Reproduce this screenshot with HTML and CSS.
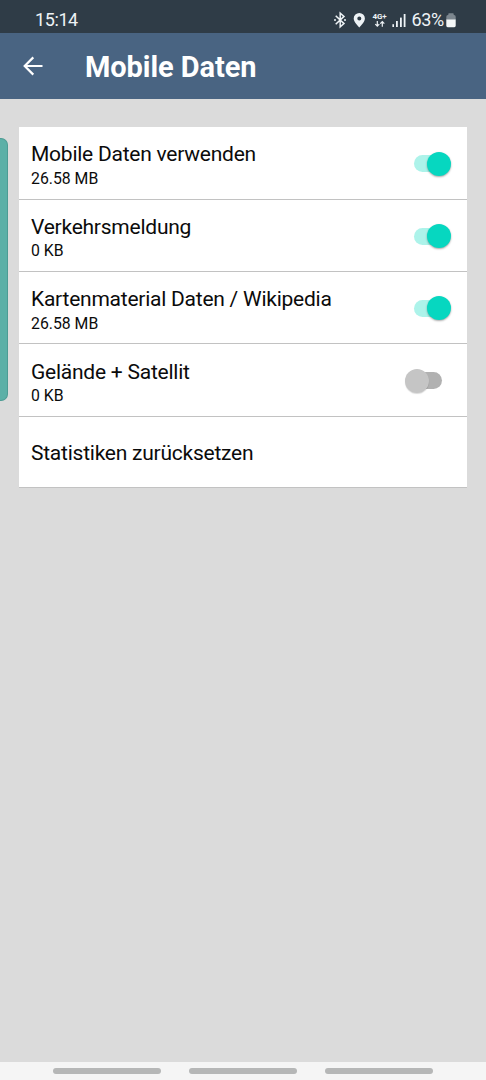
FILE: index.html
```html
<!DOCTYPE html>
<html lang="de">
<head>
<meta charset="utf-8">
<title>Mobile Daten</title>
<link rel="stylesheet" href="styles.css">
</head>
<body>
<div class="screen">
  <div class="status">
    <span class="clock">15:14</span>
    <svg class="status-icons" width="76" height="20" viewBox="0 0 76 20">
      <g fill="none" stroke="#eef3f6" stroke-width="1.5">
        <path d="M2.7 5.8 11 13.6 7.2 16.9V3.1L11 6.4 2.7 14.2"/>
      </g>
      <g fill="#eef3f6">
        <circle cx="2" cy="10" r="1"/><circle cx="12" cy="10" r="1"/>
        <path fill-rule="evenodd" d="M26.3 3a5.6 5.6 0 0 0-5.6 5.5c0 3.8 5.6 8.9 5.6 8.9s5.6-5.1 5.6-8.9A5.6 5.6 0 0 0 26.3 3zm0 3.4a2 2 0 1 1 0 4 2 2 0 0 1 0-4z"/>
        <text class="network" x="39.6" y="9.4" textLength="14">4G+</text>
        <rect x="59.4" y="14.2" width="1.6" height="2.8"/>
        <rect x="63" y="11" width="1.8" height="6"/>
        <rect x="67" y="7.6" width="1.8" height="9.4"/>
        <rect x="70.7" y="4" width="1.8" height="13"/>
      </g>
      <path d="M44.3 11v5.2M42.3 14.2l2 2 2-2M49.3 16.8v-5.2M47.3 13.6l2-2 2 2" fill="none" stroke="#eef3f6" stroke-width="1.2"/>
    </svg>
    <span class="percent">63%</span>
    <svg class="battery" width="10" height="16" viewBox="0 0 10 16">
      <path d="M2.3 2V.9Q2.3.3 3 .3h4q.7 0 .7.6V2H8q1.7 0 1.7 1.7V7H.3V3.7Q.3 2 2 2z" fill="#7c868e"/>
      <path d="M.3 6.5h9.4v6.3q0 1.4-1.4 1.4H1.7q-1.4 0-1.4-1.4z" fill="#f4f7f8"/>
    </svg>
  </div>
  <header class="bar">
    <svg class="back" width="20" height="20" viewBox="0 0 20 20" fill="none" stroke="#fff" stroke-width="2.2">
      <path d="M19.5 10H2M10.3 1.4 1.7 10l8.6 8.6"/>
    </svg>
    <h1 class="title">Mobile Daten</h1>
  </header>
  <main class="content">
    <div class="edge-handle"></div>
    <div class="card">
      <div class="row">
        <div class="labels"><div class="name">Mobile Daten verwenden</div><div class="usage">26.58 MB</div></div>
        <div class="switch on"><div class="thumb"></div></div>
      </div>
      <div class="row">
        <div class="labels"><div class="name">Verkehrsmeldung</div><div class="usage">0 KB</div></div>
        <div class="switch on"><div class="thumb"></div></div>
      </div>
      <div class="row">
        <div class="labels"><div class="name">Kartenmaterial Daten / Wikipedia</div><div class="usage">26.58 MB</div></div>
        <div class="switch on"><div class="thumb"></div></div>
      </div>
      <div class="row">
        <div class="labels"><div class="name">Gelände + Satellit</div><div class="usage">0 KB</div></div>
        <div class="switch off"><div class="thumb"></div></div>
      </div>
      <div class="row reset"><div class="name">Statistiken zurücksetzen</div></div>
    </div>
  </main>
  <nav class="nav"><i class="pill"></i><i class="pill"></i><i class="pill"></i></nav>
</div>
</body>
</html>
```
FILE: styles.css
```css
* { box-sizing: border-box; }
body { margin: 0; font-family: Roboto, "Liberation Sans", sans-serif; color: #0b0b0b; }
.screen { width: 486px; height: 1080px; display: flex; flex-direction: column; background: #dbdbdb; overflow: hidden; }
.status { height: 33px; flex: none; background: #2f3c47; color: #eef3f6; display: flex; align-items: center; padding: 7px 30px 0 35px; }
.clock { font-size: 18px; line-height: 26px; letter-spacing: -.4px; }
.status-icons { margin-left: auto; }
.network { font-size: 8px; font-weight: 700; }
.percent { font-size: 18px; line-height: 26px; letter-spacing: -.3px; margin: 0 2px 0 2.5px; }
.battery { margin-top: 1px; }
.bar { height: 66px; flex: none; background: #496482; display: flex; align-items: center; padding-left: 23px; }
.back { flex: none; }
.title { margin: 2px 0 0 42px; font-size: 29px; line-height: 34px; letter-spacing: -.08px; font-weight: 700; color: #fff; }
.content { flex: 1; display: flex; align-items: flex-start; padding-top: 28px; }
.edge-handle { width: 8px; height: 263px; margin: 11px 11px 0 0; background: #5cb0a7; border: 1px solid #4d9c94; border-left: 0; border-radius: 0 7px 7px 0; }
.card { width: 448px; background: #fff; }
.row { height: 72.4px; border-bottom: 1px solid #c2c2c2; display: flex; justify-content: space-between; padding: 0 16px 0 12px; }
.row:first-child { height: 72.6px; }
.labels { padding-top: 13.4px; }
.name { font-size: 21px; line-height: 28px; letter-spacing: -.24px; white-space: nowrap; }
.usage { font-size: 15.8px; line-height: 20px; padding-top: .4px; }
.reset { height: 71px; padding-top: 22px; }
.switch { width: 37px; height: 17px; border-radius: 9px; margin-top: 28px; display: flex; align-items: center; }
.on { background: linear-gradient(90deg, #adf3ea 26px, transparent 26px); justify-content: flex-end; }
.off { margin-right: 9px; background: linear-gradient(90deg, transparent 12px, #b1b1b1 12px); }
.thumb { width: 24px; height: 24px; flex: none; border-radius: 50%; background: #06d7c0; box-shadow: 0 1px 2px rgba(0, 0, 0, .35); }
.off .thumb { background: #c5c5c5; box-shadow: 0 1px 1px rgba(0, 0, 0, .15); }
.nav { height: 18px; flex: none; background: #f5f5f5; display: flex; gap: 28px; padding: 6px 0 0 53px; }
.pill { width: 108px; height: 6px; border-radius: 3px; background: #b6b7b7; }
```
